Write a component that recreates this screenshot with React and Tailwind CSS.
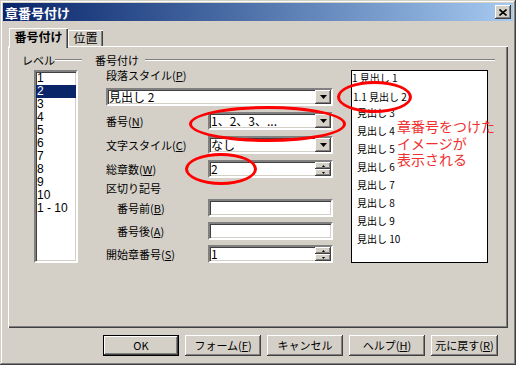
import React from "react";

const F = "font-['Noto_Sans_CJK_JP',sans-serif]";
const sunken =
  "border-2 border-t-[#808080] border-l-[#808080] border-b-white border-r-white shadow-[inset_1px_1px_#404040,inset_-1px_-1px_#d4d0c8]";
const raised =
  "shadow-[inset_-1px_-1px_#404040,inset_1px_1px_#ffffff,inset_-2px_-2px_#808080,inset_2px_2px_#d4d0c8]";

function U({ c }) {
  return (
    <>
      (<span className="underline underline-offset-1">{c}</span>)
    </>
  );
}

function Combo({ text, className = "" }) {
  return (
    <div className={`flex h-[18px] bg-white ${sunken} ${className}`}>
      <div className="flex flex-1 items-center pl-[1px] text-[12px] leading-none text-black">{text}</div>
      <div className={`flex w-[16px] items-center justify-center bg-[#d4d0c8] ${raised}`}>
        <svg width="7" height="4" viewBox="0 0 7 4">
          <path d="M0 0h7L3.5 4z" fill="#000" />
        </svg>
      </div>
    </div>
  );
}

function Spin({ text, className = "" }) {
  return (
    <div className={`flex h-[18px] bg-white ${sunken} ${className}`}>
      <div className="flex flex-1 items-center pl-[1px] text-[12px] leading-none text-black">{text}</div>
      <div className="flex w-[16px] flex-col">
        <div className={`flex flex-1 items-center justify-center bg-[#d4d0c8] ${raised}`}>
          <svg width="3" height="2" viewBox="0 0 3 2">
            <path d="M1.5 0L3 2H0z" fill="#000" />
          </svg>
        </div>
        <div className={`flex flex-1 items-center justify-center bg-[#d4d0c8] ${raised}`}>
          <svg width="3" height="2" viewBox="0 0 3 2">
            <path d="M0 0h3L1.5 2z" fill="#000" />
          </svg>
        </div>
      </div>
    </div>
  );
}

function Input({ className = "" }) {
  return <div className={`h-[18px] bg-white ${sunken} ${className}`} />;
}

function Btn({ children, w = "w-[76px]", def = false }) {
  return (
    <div
      className={`flex h-[21px] ${w} items-center justify-center text-[11px] leading-none text-black ${
        def
          ? "border border-black shadow-[inset_-1px_-1px_#404040,inset_1px_1px_#ffffff,inset_-2px_-2px_#808080]"
          : raised
      }`}
    >
      {children}
    </div>
  );
}

export default function App() {
  const levels = ["1", "2", "3", "4", "5", "6", "7", "8", "9", "10", "1 - 10"];
  return (
    <div
      className={`relative flex h-[365px] w-[516px] flex-col overflow-hidden bg-[#d4d0c8] p-[3px] ${F} shadow-[inset_-1px_-1px_#404040,inset_1px_1px_#d4d0c8,inset_-2px_-2px_#808080,inset_2px_2px_#ffffff]`}
    >
      {/* Title bar */}
      <div className="flex h-[18px] items-center justify-between bg-gradient-to-r from-[#0a246a] to-[#a6caf0] pl-[2px] pr-[2px]">
        <span className="text-[13px] font-bold leading-none text-white">章番号付け</span>
        <div className={`flex h-[14px] w-[16px] items-center justify-center bg-[#d4d0c8] ${raised}`}>
          <svg width="8" height="7" viewBox="0 0 8 7">
            <path d="M0.5 0.5L7.5 6.5M7.5 0.5L0.5 6.5" stroke="#000" strokeWidth="1.6" />
          </svg>
        </div>
      </div>

      {/* Tabs */}
      <div className="mt-[7px] flex h-[18px] items-end pl-[6px]">
        <div className="relative z-10 -mb-[2px] flex h-[20px] w-[59px] items-center justify-center bg-[#d4d0c8] pb-[2px] text-[12px] font-bold leading-none text-black shadow-[inset_1px_1px_#ffffff,inset_-1px_0_#404040,inset_-2px_0_#808080]">
          番号付け
        </div>
        <div className="flex h-[16px] w-[35px] items-center justify-center text-[12px] leading-none text-black shadow-[inset_1px_1px_#ffffff,inset_-1px_0_#404040,inset_-2px_0_#808080]">
          位置
        </div>
      </div>

      {/* Panel */}
      <div className="ml-[5px] flex h-[282px] w-[500px] flex-col pl-[14px] pr-[13px] pt-[7px] shadow-[inset_1px_1px_#ffffff,inset_-1px_-1px_#404040,inset_-2px_-2px_#808080]">
        {/* group headers */}
        <div className="flex h-[14px] items-center text-[11px] leading-none text-black">
          <span className="w-[33px]">レベル</span>
          <div className="h-[2px] w-[27px] border-t border-t-[#808080] border-b border-b-white" />
          <span className="ml-[13px] w-[50px]">番号付け</span>
          <div className="h-[2px] flex-1 border-t border-t-[#808080] border-b border-b-white" />
        </div>

        <div className="mt-[3px] flex">
          {/* level list */}
          <div className={`ml-[12px] flex h-[193px] w-[44px] flex-col bg-white ${sunken}`}>
            {levels.map((l) => (
              <div
                key={l}
                className={`h-[13px] overflow-hidden pl-[1px] font-['Liberation_Sans',sans-serif] text-[12px] leading-[13px] ${
                  l === "2" ? "bg-[#0a246a] text-white" : "text-black"
                }`}
              >
                {l}
              </div>
            ))}
          </div>

          {/* form column */}
          <div className="-mt-[2px] ml-[28px] flex w-[227px] flex-col text-[11px] leading-none text-black">
            <div className="flex h-[14px] items-center">
              段落スタイル<U c="P" />
            </div>
            <Combo text="見出し 2" className="mt-[6px]" />
            <div className="mt-[6px] flex items-center">
              <span className="w-[102px]">
                番号<U c="N" />
              </span>
              <Combo text="1、2、3、..." className="w-[125px]" />
            </div>
            <div className="mt-[6px] flex items-center">
              <span className="w-[102px]">
                文字スタイル<U c="C" />
              </span>
              <Combo text="なし" className="w-[125px]" />
            </div>
            <div className="mt-[6px] flex items-center">
              <span className="w-[102px]">
                総章数<U c="W" />
              </span>
              <Spin text="2" className="w-[125px]" />
            </div>
            <div className="mt-[3px] flex h-[14px] items-center">区切り記号</div>
            <div className="mt-[4px] flex items-center">
              <span className="w-[102px] pl-[11px]">
                番号前<U c="B" />
              </span>
              <Input className="w-[125px]" />
            </div>
            <div className="mt-[5px] flex items-center">
              <span className="w-[102px] pl-[11px]">
                番号後<U c="A" />
              </span>
              <Input className="w-[125px]" />
            </div>
            <div className="mt-[5px] flex items-center">
              <span className="w-[102px]">
                開始章番号<U c="S" />
              </span>
              <Spin text="1" className="w-[125px]" />
            </div>
          </div>

          {/* preview */}
          <div className="ml-[18px] flex h-[193px] w-[137px] flex-col border border-black bg-white text-[10px] leading-none text-black">
            <div className="flex h-[14px] items-center pl-[0px]">1 見出し 1</div>
            <div className="mt-[5px] flex h-[14px] items-center pl-[1px]">1.1 見出し 2</div>
            {[3, 4, 5, 6, 7, 8, 9, 10].map((n) => (
              <div key={n} className="flex h-[18px] items-center pl-[5px]">
                見出し {n}
              </div>
            ))}
          </div>
        </div>
      </div>

      {/* Buttons */}
      <div className="mt-[7px] flex justify-end gap-[6px] pr-[15px] text-black">
        <Btn def>OK</Btn>
        <Btn>
          フォーム<U c="F" />
        </Btn>
        <Btn>キャンセル</Btn>
        <Btn>
          ヘルプ<U c="H" />
        </Btn>
        <Btn w="w-[67px]">
          元に戻す<U c="R" />
        </Btn>
      </div>

      {/* Annotations */}
      <div className="pointer-events-none absolute left-[337px] top-[81px] h-[32px] w-[75px] rounded-[50%] border-[3px] border-[#ff0000]" />
      <div className="pointer-events-none absolute left-[189px] top-[106px] h-[36px] w-[157px] rounded-[50%] border-[3px] border-[#ff0000]" />
      <div className="pointer-events-none absolute left-[185px] top-[153px] h-[32px] w-[72px] rounded-[50%] border-[3px] border-[#ff0000]" />
      <div className="pointer-events-none absolute left-[397px] top-[118px] text-[14px] leading-[16.5px] text-[#f03030]">
        <div>章番号をつけた</div>
        <div>イメージが</div>
        <div>表示される</div>
      </div>
    </div>
  );
}
